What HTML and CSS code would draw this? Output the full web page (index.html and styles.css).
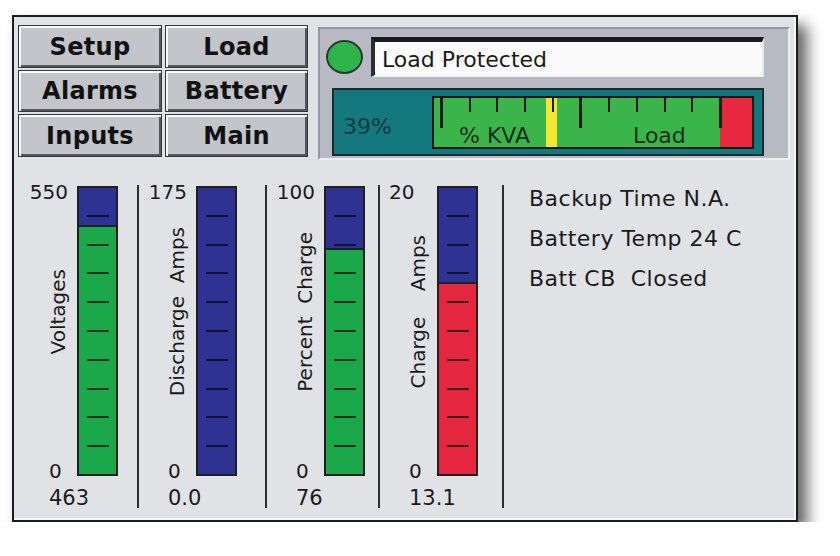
FILE: index.html
```html
<!DOCTYPE html>
<html lang="en">
<head>
    <meta charset="UTF-8">
    <meta name="viewport" content="width=device-width, initial-scale=1.0">
    <title>Battery</title>
    <link rel="stylesheet" href="styles.css">
</head>
<body>
    <div class="panel">
        <div class="top-row">
            <nav class="nav-grid">
                <button class="nav-btn">Setup</button>
                <button class="nav-btn">Load</button>
                <button class="nav-btn">Alarms</button>
                <button class="nav-btn">Battery</button>
                <button class="nav-btn">Inputs</button>
                <button class="nav-btn">Main</button>
            </nav>

            <div class="status-box">
                <div class="status-row">
                    <span class="status-lamp"></span>
                    <div class="status-field">Load Protected</div>
                </div>
                <div class="kva-box">
                    <span class="kva-value">39%</span>
                    <div class="kva-scale">
                        <div class="kva-zone">
                            <span>% KVA</span>
                            <span class="kva-load">Load</span>
                        </div>
                        <div class="kva-red"></div>
                        <div class="kva-pointer" style="left: 112px"></div>
                        <div class="kva-ticks">
                            <i class="long"></i><i></i><i></i><i></i><i></i>
                            <i class="long"></i><i></i><i></i><i></i><i></i>
                            <i class="long"></i>
                        </div>
                    </div>
                </div>
            </div>
        </div>

        <div class="meters">
            <div class="gauge-cell">
                <div class="gauge">
                    <div class="scale">
                        <span class="scale-max">550</span>
                        <span class="scale-name">Voltages</span>
                        <span class="scale-min">0</span>
                    </div>
                    <div class="bar">
                        <div class="bar-fill green" style="height: 87%"></div>
                        <div class="bar-ticks"><i></i><i></i><i></i><i></i><i></i><i></i><i></i><i></i><i></i></div>
                    </div>
                    <div class="reading">463</div>
                </div>
            </div>
            <div class="divider"></div>

            <div class="gauge-cell">
                <div class="gauge">
                    <div class="scale">
                        <span class="scale-max">175</span>
                        <span class="scale-name">Discharge  Amps</span>
                        <span class="scale-min">0</span>
                    </div>
                    <div class="bar">
                        <div class="bar-ticks"><i></i><i></i><i></i><i></i><i></i><i></i><i></i><i></i><i></i></div>
                    </div>
                    <div class="reading">0.0</div>
                </div>
            </div>
            <div class="divider"></div>

            <div class="gauge-cell">
                <div class="gauge">
                    <div class="scale">
                        <span class="scale-max">100</span>
                        <span class="scale-name">Percent  Charge</span>
                        <span class="scale-min">0</span>
                    </div>
                    <div class="bar">
                        <div class="bar-fill green" style="height: 79%"></div>
                        <div class="bar-ticks"><i></i><i></i><i></i><i></i><i></i><i></i><i></i><i></i><i></i></div>
                    </div>
                    <div class="reading">76</div>
                </div>
            </div>
            <div class="divider"></div>

            <div class="gauge-cell">
                <div class="gauge">
                    <div class="scale">
                        <span class="scale-max wide-gap">20</span>
                        <span class="scale-name">Charge    Amps</span>
                        <span class="scale-min">0</span>
                    </div>
                    <div class="bar">
                        <div class="bar-fill red" style="height: 67%"></div>
                        <div class="bar-ticks"><i></i><i></i><i></i><i></i><i></i><i></i><i></i><i></i><i></i></div>
                    </div>
                    <div class="reading">13.1</div>
                </div>
            </div>
            <div class="divider"></div>

            <div class="info">
                <p>Backup Time N.A.</p>
                <p>Battery Temp 24 C</p>
                <p>Batt CB  Closed</p>
            </div>
        </div>
    </div>
</body>
</html>
```

FILE: styles.css
```css
/* 전체 */
body {
    margin: 0;
    background-color: #ffffff;
    font-family: "DejaVu Sans", "Liberation Sans", sans-serif;
    color: #1a1a1a;
}

/* 패널 */
.panel {
    box-sizing: border-box;
    width: 786px;
    height: 507px;
    margin: 15px 0 0 12px;
    padding: 8px 0 0 4px;
    background-color: #e1e2e6;
    border: 2px solid #1c1c1e;
    box-shadow: inset -2px -2px 0 #f4f5f7, 9px 10px 14px rgba(0, 0, 0, 0.62);
}

.top-row {
    display: flex;
    align-items: flex-start;
    gap: 10px;
}

/* 메뉴 버튼 */
.nav-grid {
    display: grid;
    grid-template-columns: 144px 143px;
    grid-template-rows: 43px 42px 43px;
    gap: 2px 3px;
}
.nav-btn {
    width: 100%;
    height: 100%;
    margin: 0;
    padding: 0;
    background-color: #c3c5cb;
    border: 1px solid #35363a;
    box-shadow: inset 2px 2px 0 #fafafb, inset -2px -2px 0 #55575c;
    font-family: inherit;
    font-size: 24px;
    font-weight: bold;
    letter-spacing: 0.3px;
    color: #111111;
    cursor: pointer;
}

/* 상태 박스 */
.status-box {
    box-sizing: border-box;
    width: 472px;
    height: 133px;
    margin-top: 2px;
    padding: 8px 24px 0 6px;
    background-color: #b7bac3;
    border: 2px solid;
    border-color: #9598a0 #eef0f2 #eef0f2 #9598a0;
}
.status-row {
    display: flex;
    align-items: center;
    gap: 8px;
}
.status-lamp {
    flex: none;
    box-sizing: border-box;
    width: 37px;
    height: 34px;
    border-radius: 50%;
    background-color: #2fb34b;
    border: 2px solid #2b3a2e;
}
.status-field {
    flex: 1;
    box-sizing: border-box;
    height: 40px;
    padding: 2px 0 0 7px;
    border-style: solid;
    border-width: 5px 2px 2px 4px;
    border-color: #1b1b1b #e6e7ea #f1f2f4 #2c2c2c;
    background-color: #fafafa;
    font-size: 22px;
    line-height: 31px;
    color: #1a1a1a;
}

/* KVA 막대 */
.kva-box {
    display: flex;
    box-sizing: border-box;
    height: 68px;
    margin: 11px 0 0 6px;
    background-color: #14787f;
    border: 2px solid #1d2a2d;
}
.kva-value {
    margin: 26px 0 0 9px;
    font-size: 22px;
    line-height: 22px;
    color: #0c3b40;
}
.kva-scale {
    position: relative;
    display: flex;
    box-sizing: border-box;
    width: 322px;
    height: 53px;
    margin: 6px 8px 0 auto;
    border: 2px solid #151515;
}
.kva-zone {
    flex: 1;
    display: flex;
    align-items: flex-end;
    padding-left: 25px;
    background-color: #3bb54a;
    font-size: 22px;
    line-height: 22px;
    color: #1a2e1c;
}
.kva-load {
    margin-left: 103px;
}
.kva-red {
    width: 32px;
    background-color: #e8283f;
}
.kva-pointer {
    position: absolute;
    top: 0;
    bottom: 0;
    width: 11px;
    background-color: #f4e52e;
}
.kva-ticks {
    position: absolute;
    top: 0;
    left: 6px;
    right: 30px;
    display: flex;
    justify-content: space-between;
    align-items: flex-start;
}
.kva-ticks i {
    width: 2px;
    height: 14px;
    background-color: #1a1a1a;
}
.kva-ticks i.long {
    width: 3px;
    height: 30px;
}

/* 게이지 영역 */
.meters {
    display: grid;
    grid-template-columns: 117px 2px 126px 2px 111px 2px 122px 2px 1fr;
    align-items: start;
    margin-top: 22px;
    padding-left: 2px;
}
.divider {
    width: 2px;
    height: 323px;
    margin-top: 3px;
    background-color: #2e2e30;
}
.gauge-cell {
    padding-left: 9px;
}
.gauge {
    display: grid;
    grid-template-columns: 48px 41px;
}

.scale {
    display: flex;
    flex-direction: column;
    justify-content: space-between;
    height: 299px;
    font-size: 20px;
    line-height: 20px;
}
.scale-max {
    text-align: right;
    padding-right: 9px;
}
.scale-max.wide-gap {
    padding-right: 27px;
}
.scale-name {
    align-self: flex-start;
    margin: 0 0 39px 19px;
    writing-mode: vertical-rl;
    transform: rotate(180deg);
    white-space: pre;
}
.scale-min {
    padding-left: 20px;
}

.bar {
    position: relative;
    box-sizing: border-box;
    height: 290px;
    margin-top: 4px;
    display: flex;
    flex-direction: column;
    justify-content: flex-end;
    background-color: #2e3292;
    border: 2px solid #1f1f22;
}
.bar-fill {
    box-sizing: border-box;
    border-top: 2px solid #1f1f22;
}
.bar-fill.green {
    background-color: #1ba84b;
}
.bar-fill.red {
    background-color: #e5263f;
}
.bar-ticks {
    position: absolute;
    top: 0;
    left: 0;
    right: 0;
    bottom: 0;
    display: flex;
    flex-direction: column;
    justify-content: space-evenly;
    align-items: center;
}
.bar-ticks i {
    width: 22px;
    height: 2px;
    background-color: rgba(10, 10, 20, 0.75);
}

.reading {
    grid-column: 1 / span 2;
    margin-top: 7px;
    padding-left: 20px;
    font-size: 21px;
    line-height: 21px;
}

/* 오른쪽 정보 */
.info {
    margin-top: -3px;
    padding-left: 25px;
}
.info p {
    margin: 0;
    font-size: 22px;
    line-height: 40px;
    letter-spacing: 0.5px;
    white-space: pre;
}
```
